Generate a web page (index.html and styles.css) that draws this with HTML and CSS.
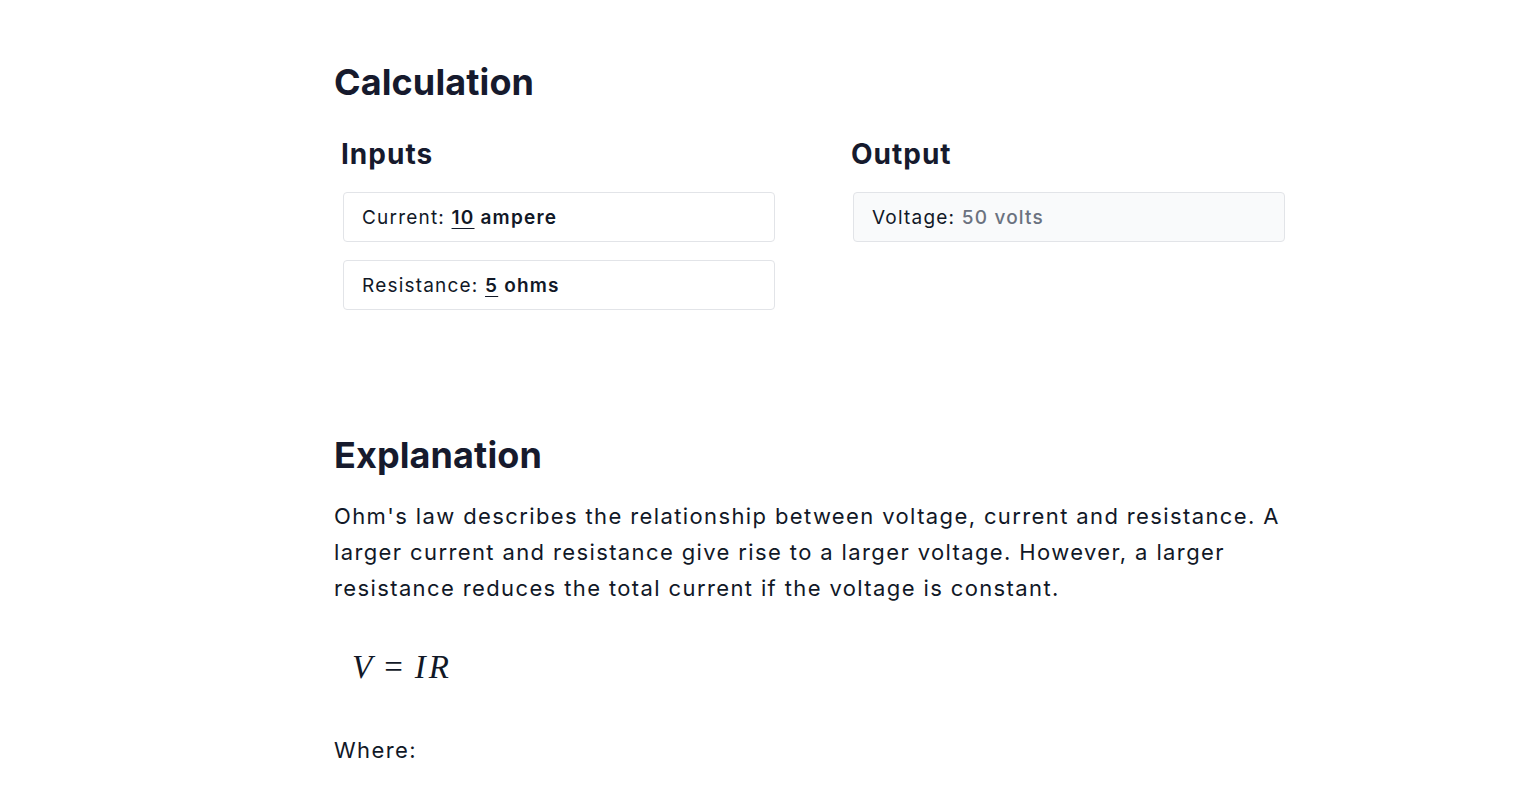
FILE: index.html
```html
<!DOCTYPE html>
<html lang="en">
<head>
    <meta charset="UTF-8">
    <meta name="viewport" content="width=device-width, initial-scale=1.0">
    <title>Ohm's Law Calculator</title>
    <link rel="stylesheet" href="styles.css">
</head>
<body>
    <div class="container">
        <section class="calculation">
            <h2>Calculation</h2>
            <div class="columns">
                <div class="column">
                    <h3>Inputs</h3>
                    <div class="field">Current: <span class="value"><u>10</u> ampere</span></div>
                    <div class="field">Resistance: <span class="value"><u>5</u> ohms</span></div>
                </div>
                <div class="column">
                    <h3>Output</h3>
                    <div class="field output">Voltage: <span class="result">50 volts</span></div>
                </div>
            </div>
        </section>

        <section class="explanation">
            <h2>Explanation</h2>
            <p>Ohm's law describes the relationship between voltage, current and resistance. A larger current and resistance give rise to a larger voltage. However, a larger resistance reduces the total current if the voltage is constant.</p>
            <div class="formula"><i>V</i><span class="eq">=</span><i class="var-i">I</i><i>R</i></div>
            <p>Where:</p>
        </section>
    </div>
</body>
</html>
```

FILE: styles.css
```css
* {
    margin: 0;
    padding: 0;
    box-sizing: border-box;
}

body {
    background: #fff;
    color: #111827;
    font-family: 'Inter', sans-serif;
}

.container {
    width: 952px;
    margin-left: 334px;
    padding-top: 60px;
}

h2 {
    font-size: 36px;
    font-weight: 700;
    line-height: 44px;
    color: #161a2d;
    letter-spacing: 0.1px;
}

h3 {
    font-size: 28px;
    font-weight: 700;
    line-height: 36px;
    color: #161a2d;
    letter-spacing: 1px;
    margin-left: -2px;
    margin-bottom: 20px;
}

.columns {
    display: grid;
    grid-template-columns: 432px 432px;
    column-gap: 78px;
    padding-left: 9px;
    margin-top: 32px;
}

.field {
    border: 1px solid #e2e4e8;
    border-radius: 4px;
    padding: 0 18px;
    height: 50px;
    display: flex;
    align-items: center;
    font-size: 19px;
    letter-spacing: 1.2px;
    margin-bottom: 18px;
    white-space: pre;
}

.value {
    font-weight: 600;
}

.value u {
    text-decoration-thickness: 1px;
    text-underline-offset: 4px;
}

.output {
    background: #f9fafb;
}

.result {
    font-weight: 500;
    color: #6b7280;
}

.explanation {
    margin-top: 105px;
}

.explanation p {
    font-size: 22px;
    line-height: 36px;
    letter-spacing: 1.38px;
    margin-top: 21px;
}

.formula {
    font-family: 'Liberation Serif', serif;
    font-size: 33px;
    line-height: 40px;
    margin: 41px 0 45px 18px;
}

.eq {
    font-style: normal;
    margin: 0 12px;
}

.var-i {
    margin-right: 3px;
}
```
